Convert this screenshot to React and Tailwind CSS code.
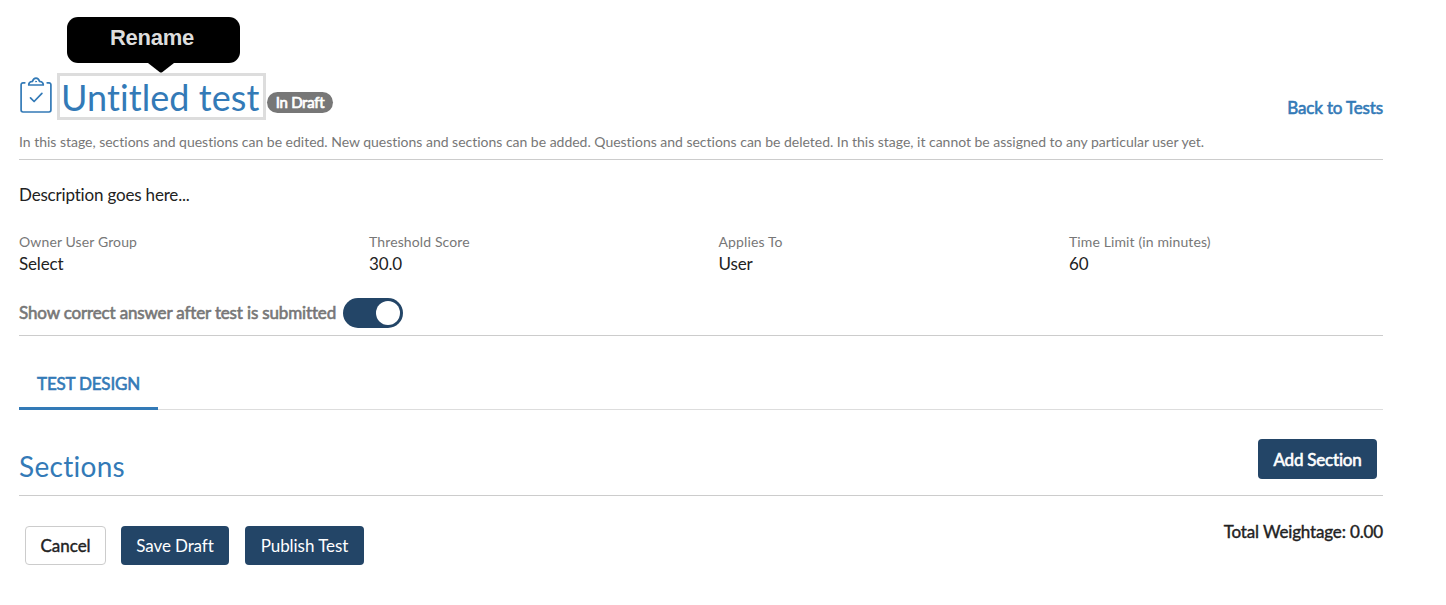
import React from 'react';

const fields = [
  { label: 'Owner User Group', value: 'Select', width: 'w-[350px]' },
  { label: 'Threshold Score', value: '30.0', width: 'w-[349.5px]' },
  { label: 'Applies To', value: 'User', width: 'w-[350.5px]' },
  { label: 'Time Limit (in minutes)', value: '60', width: 'w-[300px]' },
];

function ClipboardIcon() {
  return (
    <svg className="mt-[7px] h-[37px] w-8 shrink-0" viewBox="0 0 32 37" fill="none" stroke="#337ab7" strokeWidth="1.7" strokeLinecap="round" strokeLinejoin="round">
      <path d="M4.800 5.800H3a1.900 1.900 0 0 0-1.900 1.900v25.400A1.900 1.900 0 0 0 3 35h26a1.900 1.900 0 0 0 1.900-1.900V7.700A1.900 1.900 0 0 0 29 5.800h-1.800" />
      <path d="M8.700 8h14.600c0-2-1.300-3.300-3.700-3.600C18.900 2.200 17.700 1.100 16 1.100s-2.900 1.100-3.600 3.300C10 4.700 8.700 6 8.700 8Z" />
      <circle cx="16" cy="4.600" r="0.500" strokeWidth="1" />
      <path d="m10.500 20.800 3.600 3.700 7.800-8.200" />
    </svg>
  );
}

export default function App() {
  return (
    <div className="h-[605px] w-[1446px] overflow-hidden bg-white font-['Lato',sans-serif] text-[17px] text-[#222] [font-variant-ligatures:none]">
      <main className="ml-[19px] flex w-[1364px] flex-col">
        <header className="flex h-[160px] flex-col border-b border-[#ccc] pt-[17px]">
          <div className="ml-12 h-[56px] w-[173px] shrink-0">
            <div className="flex h-[46px] justify-center rounded-[11px] bg-black pr-[3px] pt-[6px] font-['Liberation_Sans',sans-serif] text-[22px] font-bold leading-[30px] tracking-[-0.25px] text-[#ddd]">Rename</div>
            <svg className="ml-[81px] h-[10px] w-[26px]" viewBox="0 0 26 10"><path d="M0 0h26L14.500 9q-1.500 1-3 0Z" fill="#000" /></svg>
          </div>
          <div className="flex h-[47px] shrink-0">
            <div className="-mt-[3px] ml-px"><ClipboardIcon /></div>
            <h1 className="ml-[5px] h-[47px] w-[209px] whitespace-nowrap border-[3px] border-[#ddd] pl-px text-[36px] leading-[43px] tracking-[0.08px] text-[#337ab7]">Untitled test</h1>
            <span className="ml-px mt-[19px] h-[21px] w-[66px] whitespace-nowrap rounded-full bg-[#777] text-center text-[15px] leading-[20px] tracking-[-0.3px] text-white [-webkit-text-stroke:0.7px]">In Draft</span>
            <a className="ml-auto mt-[24px] whitespace-nowrap text-[17px] leading-[22px] tracking-[-0.15px] text-[#337ab7] [-webkit-text-stroke:0.6px]">Back to Tests</a>
          </div>
          <p className="mt-[12px] whitespace-nowrap text-[14px] leading-5 tracking-[-0.014px] text-[#777]">In this stage, sections and questions can be edited. New questions and sections can be added. Questions and sections can be deleted. In this stage, it cannot be assigned to any particular user yet.</p>
        </header>

        <section className="flex h-[176px] flex-col border-b border-[#ccc] pt-[24px]">
          <p className="leading-[22px] tracking-[-0.18px]">Description goes here...</p>
          <dl className="mt-[26px] flex">
            {fields.map((field) => (
              <div key={field.label} className={field.width}>
                <dt className="text-[14px] leading-[20px] tracking-[0.12px] text-[#777]">{field.label}</dt>
                <dd className="text-[17px] leading-[23px] tracking-[-0.15px]">{field.value}</dd>
              </div>
            ))}
          </dl>
          <div className="mt-[23px] flex">
            <span className="w-[324px] whitespace-nowrap leading-[30px] tracking-[-0.15px] text-[#777] [-webkit-text-stroke:0.6px]">Show correct answer after test is submitted</span>
            <button className="flex h-[30px] w-[60px] items-center justify-end rounded-full bg-[#234567] pr-[3px]"><span className="size-6 rounded-full bg-white" /></button>
          </div>
        </section>

        <nav className="flex h-[74px] items-end border-b border-[#ddd]">
          <a className="-mb-px h-[37px] w-[139px] whitespace-nowrap border-b-[3px] border-[#337ab7] text-center leading-[22px] tracking-[-0.2px] text-[#337ab7] [-webkit-text-stroke:0.6px]">TEST DESIGN</a>
        </nav>

        <section className="flex h-[86px] justify-between border-b border-[#ccc] pr-[6px] pt-[29px]">
          <h2 className="mt-[9px] text-[28px] leading-9 tracking-[0.3px] text-[#337ab7]">Sections</h2>
          <button className="h-10 w-[119px] whitespace-nowrap rounded bg-[#234567] pt-[2px] text-[17px] tracking-[-0.2px] text-white [-webkit-text-stroke:0.6px]">Add Section</button>
        </section>

        <footer className="flex pl-[6px] pt-[30px]">
          <button className="h-[39px] w-[81px] rounded border border-[#ccc] pt-px [-webkit-text-stroke:0.4px]">Cancel</button>
          <button className="ml-[15px] h-[39px] w-[108px] whitespace-nowrap rounded bg-[#234567] pt-px tracking-[-0.1px] text-white">Save Draft</button>
          <button className="ml-4 h-[39px] w-[119px] whitespace-nowrap rounded bg-[#234567] pt-px tracking-[-0.05px] text-white">Publish Test</button>
          <p className="-mt-[5px] ml-auto whitespace-nowrap leading-[22px] tracking-[-0.15px] [-webkit-text-stroke:0.4px]">Total Weightage: 0.00</p>
        </footer>
      </main>
    </div>
  );
}
